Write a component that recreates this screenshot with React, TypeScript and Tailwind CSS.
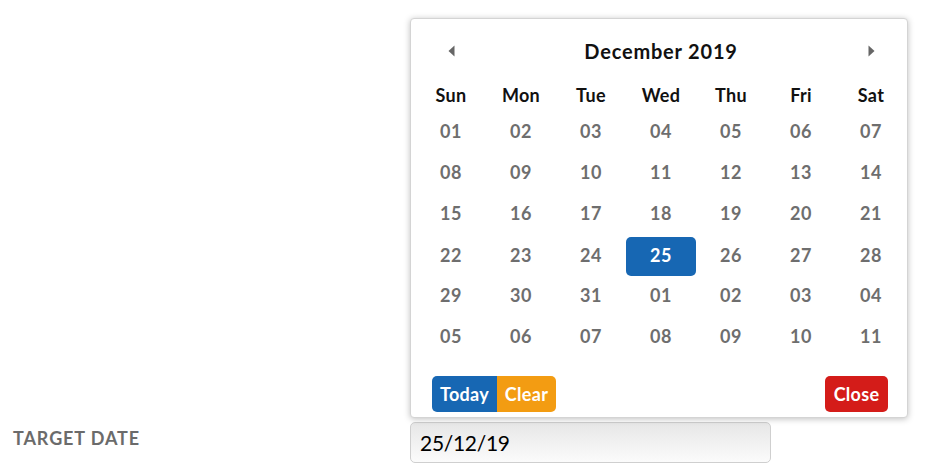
import React from "react";

const weeks: string[][] = [
  ["01", "02", "03", "04", "05", "06", "07"],
  ["08", "09", "10", "11", "12", "13", "14"],
  ["15", "16", "17", "18", "19", "20", "21"],
  ["22", "23", "24", "25", "26", "27", "28"],
  ["29", "30", "31", "01", "02", "03", "04"],
  ["05", "06", "07", "08", "09", "10", "11"],
];
const dayNames = ["Sun", "Mon", "Tue", "Wed", "Thu", "Fri", "Sat"];

export default function App() {
  return (
    <div
      className="w-[927px] h-[465px] bg-white overflow-hidden"
      style={{ fontFamily: "Lato, 'Open Sans', sans-serif" }}
    >
      <div className="flex items-center pt-[422px]">
        <div className="w-[410px] pl-[13px] mb-[9px] text-[18px] font-bold text-[#6b6b6b] uppercase tracking-[0.9px]">
          Target Date
        </div>
        <div className="relative">
          <div className="w-[361px] h-[41px] rounded-[5px] border border-[#cfcfcf] bg-gradient-to-b from-[#e7e7e7] to-[#fbfbfb] flex items-center pl-[9px] text-[21px] text-black tracking-[-0.3px]">
            25/12/19
          </div>
          {/* datepicker popup */}
          <div className="absolute left-0 bottom-[calc(100%+4px)] w-[498px] bg-white border border-[#d4d4d4] rounded-[4px] shadow-[0_1px_6px_rgba(0,0,0,0.25)] pl-[5px] pr-[1px] pt-[12px] pb-[5px]">
            <div className="grid grid-cols-7 h-[40px] items-center">
              <div className="flex justify-center">
                <svg width="7" height="12" viewBox="0 0 7 12">
                  <path d="M6.5 0.5 L0.5 6 L6.5 11.5 Z" fill="#666" />
                </svg>
              </div>
              <div className="col-span-5 text-center text-[20px] font-bold text-[#111] tracking-[0.8px]">
                December 2019
              </div>
              <div className="flex justify-center">
                <svg width="7" height="12" viewBox="0 0 7 12">
                  <path d="M0.5 0.5 L6.5 6 L0.5 11.5 Z" fill="#666" />
                </svg>
              </div>
            </div>
            <div className="grid grid-cols-7 h-[32px] mt-[8px] items-center">
              {dayNames.map((d) => (
                <div key={d} className="text-center text-[18px] font-bold text-[#111] tracking-[0.3px]">
                  {d}
                </div>
              ))}
            </div>
            {weeks.map((w, i) => (
              <div key={i} className="grid grid-cols-7 h-[41px] items-center">
                {w.map((d, j) => {
                  const sel = i === 3 && j === 3;
                  return (
                    <div key={j} className="flex justify-center">
                      {sel ? (
                        <div className="w-[73px] h-[39px] mt-[3px] rounded-[5px] bg-[#1767b3] text-white text-[18px] font-bold flex items-center justify-center tracking-[0.5px]">
                          <span className="-mt-[2px]">{d}</span>
                        </div>
                      ) : (
                        <div className="text-[18px] font-bold text-[#6e6e6e] tracking-[0.5px]">{d}</div>
                      )}
                    </div>
                  );
                })}
              </div>
            ))}
            <div className="flex justify-between items-center mt-[19px] ml-[16px] mr-[18px]">
              <div className="flex">
                <div className="h-[36px] w-[65px] bg-[#1767b3] rounded-l-[5px] text-white text-[18px] font-bold flex items-center justify-center tracking-[0.3px]">
                  Today
                </div>
                <div className="h-[36px] w-[59px] bg-[#f39c12] rounded-r-[5px] text-white text-[18px] font-bold flex items-center justify-center tracking-[0.3px]">
                  Clear
                </div>
              </div>
              <div className="h-[36px] w-[63px] bg-[#d41c19] rounded-[5px] text-white text-[18px] font-bold flex items-center justify-center tracking-[0.3px]">
                Close
              </div>
            </div>
          </div>
        </div>
      </div>
    </div>
  );
}
